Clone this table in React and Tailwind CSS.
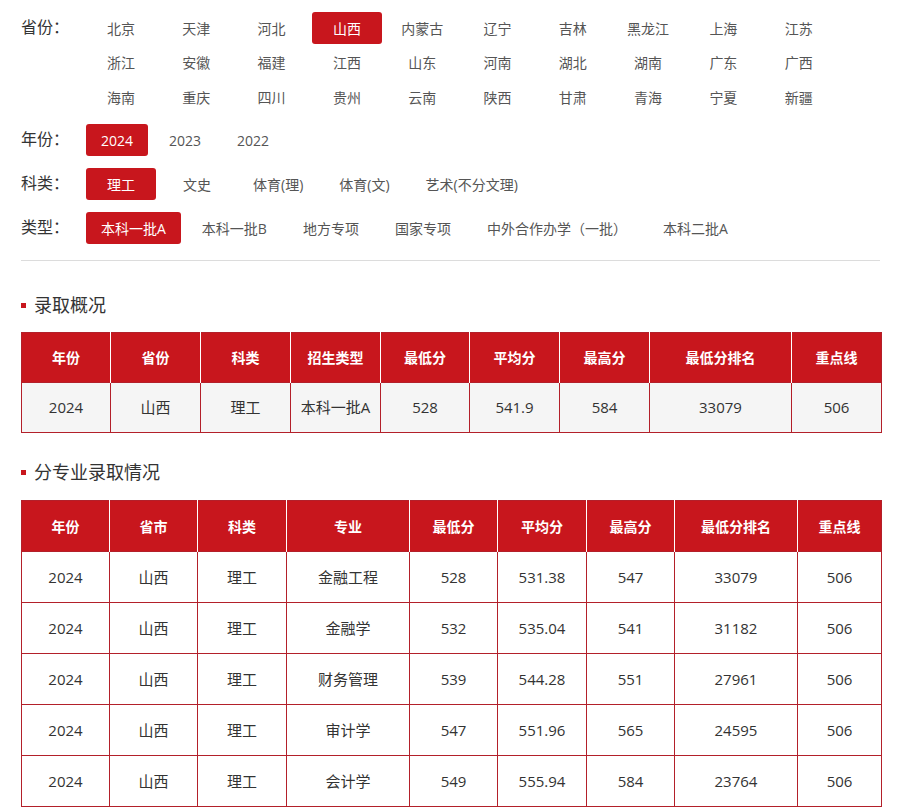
import React, { useState } from 'react'

const provinces = [
  '北京', '天津', '河北', '山西', '内蒙古', '辽宁', '吉林', '黑龙江', '上海', '江苏',
  '浙江', '安徽', '福建', '江西', '山东', '河南', '湖北', '湖南', '广东', '广西',
  '海南', '重庆', '四川', '贵州', '云南', '陕西', '甘肃', '青海', '宁夏', '新疆',
]
const years = ['2024', '2023', '2022']
const subjects = ['理工', '文史', '体育(理)', '体育(文)', '艺术(不分文理)']
const batches = ['本科一批A', '本科一批B', '地方专项', '国家专项', '中外合作办学（一批）', '本科二批A']

const summaryCols = [
  { label: '年份', w: 89 }, { label: '省份', w: 90 }, { label: '科类', w: 90 },
  { label: '招生类型', w: 90 }, { label: '最低分', w: 89 }, { label: '平均分', w: 90 },
  { label: '最高分', w: 90 }, { label: '最低分排名', w: 142 }, { label: '重点线', w: 90 },
]
const summaryRow = ['2024', '山西', '理工', '本科一批A', '528', '541.9', '584', '33079', '506']

const majorCols = [
  { label: '年份', w: 88 }, { label: '省市', w: 88 }, { label: '科类', w: 89 },
  { label: '专业', w: 123 }, { label: '最低分', w: 88 }, { label: '平均分', w: 89 },
  { label: '最高分', w: 88 }, { label: '最低分排名', w: 123 }, { label: '重点线', w: 84 },
]
const majorRows = [
  ['2024', '山西', '理工', '金融工程', '528', '531.38', '547', '33079', '506'],
  ['2024', '山西', '理工', '金融学', '532', '535.04', '541', '31182', '506'],
  ['2024', '山西', '理工', '财务管理', '539', '544.28', '551', '27961', '506'],
  ['2024', '山西', '理工', '审计学', '547', '551.96', '565', '24595', '506'],
  ['2024', '山西', '理工', '会计学', '549', '555.94', '584', '23764', '506'],
]

function Chip({ text, active, onClick, className = '' }) {
  return (
    <button
      onClick={onClick}
      className={`h-[32px] rounded-[3px] text-[14px] whitespace-nowrap flex items-center justify-center ${active ? 'bg-[#c8161d] text-white' : 'text-[#555] hover:text-[#c8161d]'} ${className}`}
    >
      {text}
    </button>
  )
}

function FilterRow({ label, children, className = '' }) {
  return (
    <div className={`flex ${className}`}>
      <div className="w-[65px] shrink-0 h-[29px] flex items-center text-[16px] text-[#333]">{label}</div>
      {children}
    </div>
  )
}

function SectionTitle({ children }) {
  return (
    <div className="flex items-center h-[24px]">
      <span className="w-[5px] h-[5px] bg-[#c8161d] mr-[8px]" />
      <span className="text-[18px] text-[#333]">{children}</span>
    </div>
  )
}

function DataTable({ cols, rows, rowH, bodyBg }) {
  return (
    <table className="w-[860px] table-fixed border-collapse border border-[#b3202a] text-center">
      <colgroup>
        {cols.map((c, i) => <col key={i} style={{ width: c.w }} />)}
      </colgroup>
      <thead>
        <tr className={`${rowH} bg-[#c8161d]`}>
          {cols.map((c, i) => (
            <th key={i} className={`text-white text-[14px] font-semibold ${i > 0 ? 'border-l border-white' : ''}`}>{c.label}</th>
          ))}
        </tr>
      </thead>
      <tbody>
        {rows.map((r, ri) => (
          <tr key={ri} className={`${rowH} ${bodyBg}`}>
            {r.map((v, ci) => (
              <td key={ci} className="border border-[#b3202a] text-[15px] text-[#333] font-normal">{v}</td>
            ))}
          </tr>
        ))}
      </tbody>
    </table>
  )
}

export default function App() {
  const [province, setProvince] = useState('山西')
  const [year, setYear] = useState('2024')
  const [subject, setSubject] = useState('理工')
  const [batch, setBatch] = useState('本科一批A')

  return (
    <div className="w-[901px] min-h-[812px] bg-white px-[21px] pt-[12px]" style={{ fontFamily: '"Open Sans", "Noto Sans CJK SC", sans-serif' }}>
      {/* Filters */}
      <FilterRow label="省份：">
        <div className="grid grid-cols-[repeat(10,70px)] gap-x-[5.3px] gap-y-[2.5px]">
          {provinces.map(p => (
            <Chip key={p} text={p} active={province === p} onClick={() => setProvince(p)} className="w-[70px]" />
          ))}
        </div>
      </FilterRow>

      <FilterRow label="年份：" className="mt-[11px]">
        <div className="flex gap-[6px]">
          {years.map(y => (
            <Chip key={y} text={y} active={year === y} onClick={() => setYear(y)} className="px-[15px] min-w-[62px]" />
          ))}
        </div>
      </FilterRow>

      <FilterRow label="科类：" className="mt-[12px]">
        <div className="flex gap-[6px]">
          {subjects.map(s => (
            <Chip key={s} text={s} active={subject === s} onClick={() => setSubject(s)} className="px-[15px] min-w-[70px]" />
          ))}
        </div>
      </FilterRow>

      <FilterRow label="类型：" className="mt-[12px]">
        <div className="flex gap-[6px]">
          {batches.map(b => (
            <Chip key={b} text={b} active={batch === b} onClick={() => setBatch(b)} className="px-[15px] min-w-[70px]" />
          ))}
        </div>
      </FilterRow>

      <div className="mt-[16px] border-t border-[#dcdcdc]" />

      {/* Summary */}
      <div className="mt-[32px]">
        <SectionTitle>录取概况</SectionTitle>
      </div>
      <div className="mt-[15px]">
        <DataTable cols={summaryCols} rows={[summaryRow]} rowH="h-[50px]" bodyBg="bg-[#f5f5f5]" />
      </div>

      {/* By major */}
      <div className="mt-[27px]">
        <SectionTitle>分专业录取情况</SectionTitle>
      </div>
      <div className="mt-[16px]">
        <DataTable cols={majorCols} rows={majorRows} rowH="h-[51px]" bodyBg="bg-white" />
      </div>
    </div>
  )
}
